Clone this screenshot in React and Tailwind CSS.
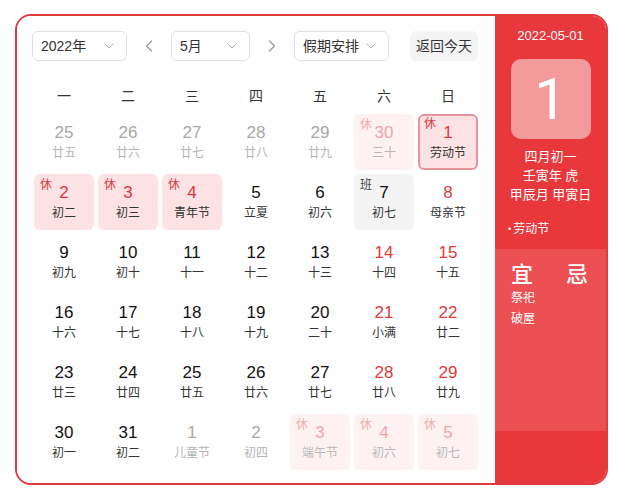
import React from 'react'
import { ChevronDown, ChevronLeft, ChevronRight } from 'lucide-react'

const weekDays = ['一', '二', '三', '四', '五', '六', '日']

// type: off = other month, rest = holiday, restOff = holiday in other month, work = 班
const days = [
  { d: 25, l: '廿五', type: 'off' },
  { d: 26, l: '廿六', type: 'off' },
  { d: 27, l: '廿七', type: 'off' },
  { d: 28, l: '廿八', type: 'off' },
  { d: 29, l: '廿九', type: 'off' },
  { d: 30, l: '三十', type: 'restOff' },
  { d: 1, l: '劳动节', type: 'rest', selected: true },
  { d: 2, l: '初二', type: 'rest' },
  { d: 3, l: '初三', type: 'rest' },
  { d: 4, l: '青年节', type: 'rest' },
  { d: 5, l: '立夏' },
  { d: 6, l: '初六' },
  { d: 7, l: '初七', type: 'work' },
  { d: 8, l: '母亲节' },
  { d: 9, l: '初九' },
  { d: 10, l: '初十' },
  { d: 11, l: '十一' },
  { d: 12, l: '十二' },
  { d: 13, l: '十三' },
  { d: 14, l: '十四' },
  { d: 15, l: '十五' },
  { d: 16, l: '十六' },
  { d: 17, l: '十七' },
  { d: 18, l: '十八' },
  { d: 19, l: '十九' },
  { d: 20, l: '二十' },
  { d: 21, l: '小满' },
  { d: 22, l: '廿二' },
  { d: 23, l: '廿三' },
  { d: 24, l: '廿四' },
  { d: 25, l: '廿五' },
  { d: 26, l: '廿六' },
  { d: 27, l: '廿七' },
  { d: 28, l: '廿八' },
  { d: 29, l: '廿九' },
  { d: 30, l: '初一' },
  { d: 31, l: '初二' },
  { d: 1, l: '儿童节', type: 'off' },
  { d: 2, l: '初四', type: 'off' },
  { d: 3, l: '端午节', type: 'restOff' },
  { d: 4, l: '初六', type: 'restOff' },
  { d: 5, l: '初七', type: 'restOff' }
]

const Select = ({ label, width }) => (
  <div
    className={`${width} h-[30px] flex items-center justify-between pl-2 pr-[9px] border border-[#dcdfe6] rounded-md text-[14px] text-[#333]`}
  >
    <span>{label}</span>
    <ChevronDown size={16} strokeWidth={1.5} className="text-[#a8abb2]" />
  </div>
)

const DayCell = ({ day, index }) => {
  const weekend = index % 7 >= 5
  const { type, selected } = day

  let cellCls = 'bg-white'
  let numCls = weekend ? 'text-[#e23b3b]' : 'text-[#111]'
  let lunarCls = 'text-[#333]'
  let tagCls = ''
  let tag = null

  if (type === 'off') {
    numCls = 'text-[#a8a8a8]'
    lunarCls = 'text-[#b4b4b4]'
  } else if (type === 'rest') {
    cellCls = 'bg-[#fde2e4]'
    numCls = 'text-[#e2363f]'
    tag = '休'
    tagCls = 'text-[#e2363f]'
  } else if (type === 'restOff') {
    cellCls = 'bg-[#fef1f2]'
    numCls = 'text-[#f0a4aa]'
    lunarCls = 'text-[#b8b8b8]'
    tag = '休'
    tagCls = 'text-[#f2aab0]'
  } else if (type === 'work') {
    // 调休上班日按工作日显示
    cellCls = 'bg-[#f4f4f5]'
    numCls = 'text-[#111]'
    tag = '班'
    tagCls = 'text-[#444]'
  }

  return (
    <div className="h-[60px] p-[2px]">
      <div
        className={`relative h-full rounded-md flex flex-col items-center justify-center ${cellCls} ${
          selected ? 'border-2 border-[#e8939b]' : ''
        }`}
      >
        {tag && (
          <span
            className={`absolute text-[12px] leading-none ${tagCls} ${selected ? 'left-[4px] top-[2px]' : 'left-[6px] top-[5px]'}`}
          >
            {tag}
          </span>
        )}
        <span className={`text-[17px] leading-5 ${numCls}`}>{day.d}</span>
        <span className={`text-[12px] leading-4 mt-[2px] ${lunarCls}`}>{day.l}</span>
      </div>
    </div>
  )
}

export default function App() {
  return (
    <div
      className="w-[619px] h-[494px] bg-white pt-[14px] pl-[15px]"
      style={{ fontFamily: '"Liberation Sans", "Noto Sans CJK SC", sans-serif' }}
    >
      <div className="w-[593px] h-[471px] flex border-2 border-[#df3a40] rounded-[16px] overflow-hidden">
        {/* Left: calendar */}
        <div className="flex-1 bg-white pl-[15px] pt-[15px]">
          {/* Controls */}
          <div className="flex items-center">
            <Select label="2022年" width="w-[95px]" />
            <div className="w-[44px] flex justify-center text-[#999]">
              <ChevronLeft size={20} strokeWidth={1.5} />
            </div>
            <Select label="5月" width="w-[79px]" />
            <div className="w-[44px] flex justify-center text-[#999]">
              <ChevronRight size={20} strokeWidth={1.5} />
            </div>
            <Select label="假期安排" width="w-[95px]" />
            <button
              type="button"
              className="ml-[21px] w-[68px] h-[30px] rounded-md bg-[#f4f4f5] text-[14px] text-[#333]"
            >
              返回今天
            </button>
          </div>

          {/* Week header */}
          <div className="mt-[20px] h-[30px] w-[448px] grid grid-cols-7 items-center">
            {weekDays.map((w) => (
              <div key={w} className="text-center text-[14px] text-[#333]">
                {w}
              </div>
            ))}
          </div>

          {/* Days */}
          <div className="mt-[1px] w-[448px] grid grid-cols-7">
            {days.map((day, i) => (
              <DayCell key={i} day={day} index={i} />
            ))}
          </div>
        </div>

        {/* Right: detail panel */}
        <div className="w-[111px] flex flex-col text-white">
          <div className="h-[233px] bg-[#e9383b] flex flex-col items-center pt-[12px]">
            <div className="text-[13px] leading-4">2022-05-01</div>
            <div className="mt-[15px] w-[80px] h-[80px] rounded-[10px] bg-[#f39a9c] flex items-center justify-center">
              <span className="text-[58px] leading-none font-normal" style={{ fontFamily: 'Roboto, "Liberation Sans", sans-serif' }}>
                1
              </span>
            </div>
            <div className="mt-[8px] text-[13px] leading-[19px] text-center">
              <div>四月初一</div>
              <div>壬寅年 虎</div>
              <div>甲辰月 甲寅日</div>
            </div>
            <div className="self-start pl-[13px] mt-[17px] text-[12px] leading-4 flex items-center">
              <span className="text-[9px] mr-[2px]">•</span>
              <span>劳动节</span>
            </div>
          </div>
          <div className="h-[182px] bg-[#ec5052] pl-[16px] pt-[14px]">
            <div className="flex text-[22px] leading-6 font-medium">
              <span>宜</span>
              <span className="ml-[33px]">忌</span>
            </div>
            <div className="text-[12px] leading-[21px] mt-[1px]">
              <div>祭祀</div>
              <div>破屋</div>
            </div>
          </div>
          <div className="flex-1 bg-[#e9383b]" />
        </div>
      </div>
    </div>
  )
}
